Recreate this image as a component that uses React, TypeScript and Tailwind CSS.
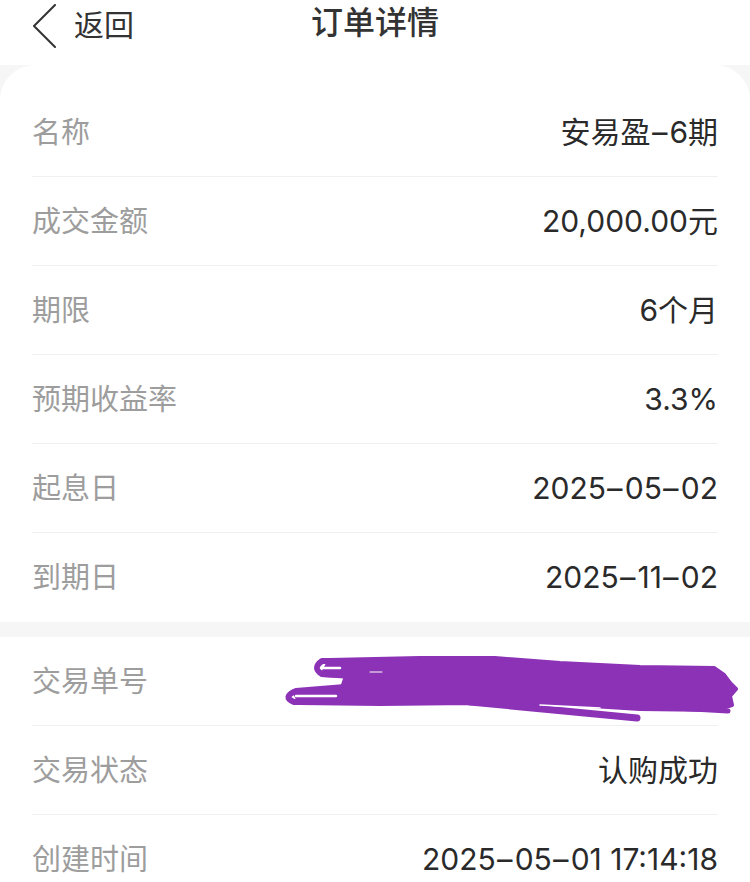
const font = "font-['Inter','Noto_Sans_CJK_SC',sans-serif]";

type Row = { label: string; value: string; hidden?: boolean };

const productRows: Row[] = [
  { label: "名称", value: "安易盈-6期" },
  { label: "成交金额", value: "20,000.00元" },
  { label: "期限", value: "6个月" },
  { label: "预期收益率", value: "3.3%" },
  { label: "起息日", value: "2025-05-02" },
  { label: "到期日", value: "2025-11-02" },
];

const tradeRows: Row[] = [
  { label: "交易单号", value: "", hidden: true },
  { label: "交易状态", value: "认购成功" },
  { label: "创建时间", value: "2025-05-01 17:14:18" },
];

// the app's font draws a wider dash than Inter does
function withDashes(text: string) {
  return text.split("-").map((part, i) => (
    <span key={i}>
      {i > 0 && <span className="mx-[2.5px] inline-block scale-x-[1.6]">-</span>}
      {part}
    </span>
  ));
}

function Scribble() {
  return (
    <svg
      className="absolute left-0 top-0 h-[89px] w-[750px] overflow-visible"
      viewBox="0 638 750 89"
    >
      <g fill="#8c32b6" stroke="#8c32b6" strokeLinecap="round" strokeLinejoin="round">
        <path
          strokeWidth="4"
          d="M330 661 L420 659 L495 659 L560 664 L640 668 L714 669 L724 676 L730 684 L736 690 L730 697 L732 706 L716 711 L640 710 L560 705 L470 704 L380 705 L300 704 L294 692 L342 689 L346 677 L322 676 Z"
        />
        <path fill="none" strokeWidth="6" d="M350 662 L322 662 Q312 669 322 675 L352 677" />
        <path fill="none" strokeWidth="6" d="M345 688 L296 692 Q282 698 294 703 L345 703" />
        <path fill="none" strokeWidth="7" d="M470 703 L637 719" />
        <path fill="none" strokeWidth="5" d="M640 707 L728 712" />
      </g>
      <g stroke="#ffffff" strokeLinecap="round" fill="none">
        <path strokeWidth="2.5" d="M321 669 L340 669" />
        <path strokeWidth="2.5" d="M296 697 L336 697" />
        <path strokeWidth="1.5" d="M540 706 L600 709" />
        <path strokeWidth="1" d="M370 673 L382 673" />
        <path strokeWidth="1" d="M690 664 L712 665" />
      </g>
    </svg>
  );
}

function DetailRow({ row, last }: { row: Row; last: boolean }) {
  return (
    <div
      className={`relative flex h-[89px] items-center justify-between px-[32px] ${
        last ? "" : "after:absolute after:bottom-0 after:left-[32px] after:right-[32px] after:h-px after:bg-[#f0f0f0]"
      }`}
    >
      <span className="text-[29px] text-[#9d9d9d]">{row.label}</span>
      {row.hidden ? (
        <Scribble />
      ) : (
        <span className="text-[30px] text-[#2a2a2a]">{withDashes(row.value)}</span>
      )}
    </div>
  );
}

export default function App() {
  return (
    <div className={`min-h-[882px] w-[750px] overflow-hidden bg-[#f6f6f6] ${font}`}>
      <header className="relative flex h-[65px] items-start justify-center bg-white pt-[2px]">
        <div className="absolute left-[32px] top-[3px] flex items-center gap-[16px]">
          <svg width="26" height="44" viewBox="0 0 26 44" fill="none">
            <path d="M23 1 L2 22 L23 43" stroke="#333333" strokeWidth="2" strokeLinecap="round" strokeLinejoin="round" />
          </svg>
          <span className="text-[30px] text-[#333333]">返回</span>
        </div>
        <h1 className="text-[32px] font-medium leading-[42px] text-[#333333]">订单详情</h1>
      </header>

      <section className="rounded-t-[35px] bg-white pt-[23px]">
        {productRows.map((row, i) => (
          <DetailRow key={row.label} row={row} last={i === productRows.length - 1} />
        ))}
      </section>

      <section className="mt-[15px] bg-white">
        {tradeRows.map((row) => (
          <DetailRow key={row.label} row={row} last={false} />
        ))}
      </section>
    </div>
  );
}
